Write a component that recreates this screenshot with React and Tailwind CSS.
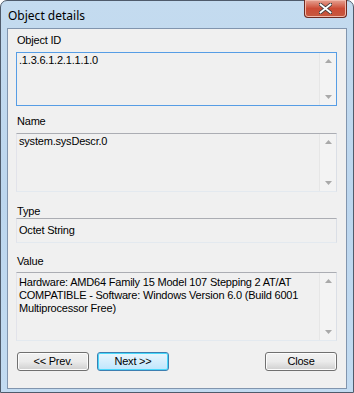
import React from "react";

const font = { fontFamily: '"Liberation Sans", Arial, sans-serif' };

function Scroll() {
  return (
    <div className="w-[17px] flex flex-col justify-between items-center border-l border-[#e6e6e6] bg-[#f3f3f3] py-[6px]">
      <svg width="7" height="4" viewBox="0 0 7 4"><path d="M0 4 L3.5 0 L7 4 Z" fill="#a9a9a9" /></svg>
      <svg width="7" height="4" viewBox="0 0 7 4"><path d="M0 0 L3.5 4 L7 0 Z" fill="#a9a9a9" /></svg>
    </div>
  );
}

function Box({ h, focused, children, scroll = true }) {
  return (
    <div
      className={
        "flex border bg-[#f0f0f0] " +
        (focused
          ? "border-[#569de5]"
          : "border-t-[#abadb3] border-l-[#e2e3ea] border-r-[#dbdfe6] border-b-[#e3e9ef]")
      }
      style={{ height: h }}
    >
      <div className="flex-1 px-[2px] pt-[1px] text-[11px] leading-[13px] tracking-[-0.2px] text-black">{children}</div>
      {scroll && <Scroll />}
    </div>
  );
}

function Btn({ children, focused }) {
  return (
    <div
      className={
        "w-[72px] h-[19px] rounded-[3px] border flex items-center justify-center text-[11px] text-black " +
        (focused
          ? "border-[#3c7fb1] bg-gradient-to-b from-[#eaf6fd] to-[#bee6fd] shadow-[inset_0_0_0_1px_#48d8fb]"
          : "border-[#707070] bg-gradient-to-b from-[#f2f2f2] via-[#ebebeb] to-[#cfcfcf] shadow-[inset_0_0_0_1px_#fcfcfc]")
      }
    >
      {children}
    </div>
  );
}

export default function App() {
  return (
    <div className="w-[354px] h-[393px] bg-white" style={font}>
      <div className="w-[354px] h-[393px] rounded-t-[7px] border border-[#4f5b6b] bg-gradient-to-b from-[#c4dbef] via-[#bcd6ee] to-[#c2dbf1] flex flex-col px-[6px] pb-[3px] relative">
        <div className="h-[27px] flex items-start pt-[6px] pl-[1px] text-[12px] text-black" style={{ fontFamily: '"Noto Sans", "Liberation Sans", sans-serif' }}>
          Object details
        </div>
        <div className="absolute top-[-1px] right-[6px] w-[43px] h-[18px] rounded-b-[4px] border border-[#6d2a21] border-t-0 bg-gradient-to-b from-[#e4a192] via-[#cc4b35] to-[#c5593f] flex items-center justify-center shadow-[inset_0_0_0_1px_#f1b8a9]">
          <svg width="13" height="11" viewBox="0 0 13 11">
            <path d="M1 1 L12 10 M12 1 L1 10" stroke="#3d3d3d" strokeWidth="3.4" strokeLinecap="square" />
            <path d="M1.5 1.5 L11.5 9.5 M11.5 1.5 L1.5 9.5" stroke="#ffffff" strokeWidth="1.8" strokeLinecap="square" />
          </svg>
        </div>
        <div className="flex-1 border border-[#8195ae] bg-[#f0f0f0] pl-[8px] pr-[9px] pt-[5px] flex flex-col text-[11px] tracking-[-0.2px] text-black">
          <div className="h-[13px] leading-[13px] pl-[1px]">Object ID</div>
          <div className="h-[5px]" />
          <Box h={54} focused>.1.3.6.1.2.1.1.1.0</Box>
          <div className="h-[9px]" />
          <div className="h-[13px] leading-[13px] pl-[1px]">Name</div>
          <div className="h-[5px]" />
          <Box h={59}>system.sysDescr.0</Box>
          <div className="h-[13px]" />
          <div className="h-[13px] leading-[13px] pl-[1px]">Type</div>
          <Box h={25} scroll={false}><div className="pt-[4px]">Octet String</div></Box>
          <div className="h-[12px]" />
          <div className="h-[13px] leading-[13px] pl-[1px]">Value</div>
          <div className="h-[4px]" />
          <Box h={69}>
            <div className="pt-[2px]">
              Hardware: AMD64 Family 15 Model 107 Stepping 2 AT/AT COMPATIBLE - Software: Windows Version 6.0 (Build 6001 Multiprocessor Free)
            </div>
          </Box>
          <div className="h-[11px]" />
          <div className="flex items-center pl-[1px]">
            <Btn>&lt;&lt; Prev.</Btn>
            <div className="w-[8px]" />
            <Btn focused>Next &gt;&gt;</Btn>
            <div className="flex-1" />
            <Btn>Close</Btn>
          </div>
        </div>
      </div>
    </div>
  );
}
